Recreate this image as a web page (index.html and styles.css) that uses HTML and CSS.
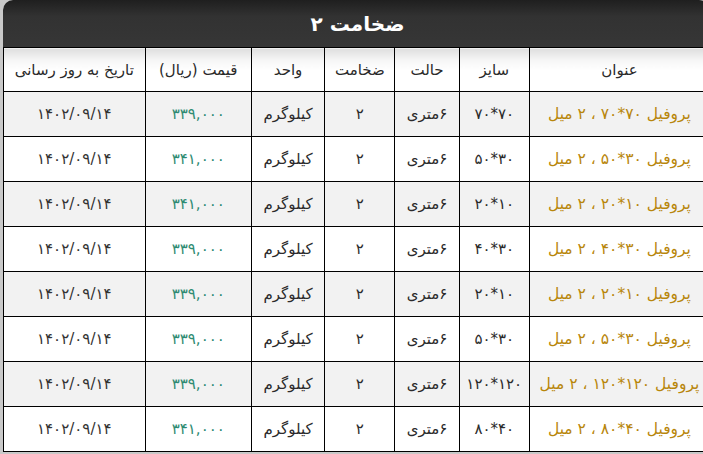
FILE: index.html
```html
<!DOCTYPE html>
<html lang="fa" dir="rtl">
<head>
<meta charset="utf-8">
<title>ضخامت ۲</title>
<link rel="stylesheet" href="styles.css">
</head>
<body>
<div class="panel">
  <div class="panel-head">ضخامت ۲</div>
  <table class="price-table">
    <colgroup>
      <col class="c-title"><col class="c-size"><col class="c-state"><col class="c-thick"><col class="c-unit"><col class="c-price"><col class="c-date">
    </colgroup>
    <thead>
      <tr><th>عنوان</th><th>سایز</th><th>حالت</th><th>ضخامت</th><th>واحد</th><th>قیمت (ریال)</th><th>تاریخ به روز رسانی</th></tr>
    </thead>
    <tbody>
      <tr><td class="name">پروفیل ۷۰*۷۰ ، ۲ میل</td><td>۷۰*۷۰</td><td>۶متری</td><td>۲</td><td>کیلوگرم</td><td class="price">۳۳۹,۰۰۰</td><td class="date">۱۴۰۲/۰۹/۱۴</td></tr>
      <tr><td class="name">پروفیل ۳۰*۵۰ ، ۲ میل</td><td>۳۰*۵۰</td><td>۶متری</td><td>۲</td><td>کیلوگرم</td><td class="price">۳۴۱,۰۰۰</td><td class="date">۱۴۰۲/۰۹/۱۴</td></tr>
      <tr><td class="name">پروفیل ۱۰*۲۰ ، ۲ میل</td><td>۱۰*۲۰</td><td>۶متری</td><td>۲</td><td>کیلوگرم</td><td class="price">۳۴۱,۰۰۰</td><td class="date">۱۴۰۲/۰۹/۱۴</td></tr>
      <tr><td class="name">پروفیل ۳۰*۴۰ ، ۲ میل</td><td>۳۰*۴۰</td><td>۶متری</td><td>۲</td><td>کیلوگرم</td><td class="price">۳۳۹,۰۰۰</td><td class="date">۱۴۰۲/۰۹/۱۴</td></tr>
      <tr><td class="name">پروفیل ۱۰*۲۰ ، ۲ میل</td><td>۱۰*۲۰</td><td>۶متری</td><td>۲</td><td>کیلوگرم</td><td class="price">۳۳۹,۰۰۰</td><td class="date">۱۴۰۲/۰۹/۱۴</td></tr>
      <tr><td class="name">پروفیل ۳۰*۵۰ ، ۲ میل</td><td>۳۰*۵۰</td><td>۶متری</td><td>۲</td><td>کیلوگرم</td><td class="price">۳۳۹,۰۰۰</td><td class="date">۱۴۰۲/۰۹/۱۴</td></tr>
      <tr><td class="name">پروفیل ۱۲۰*۱۲۰ ، ۲ میل</td><td>۱۲۰*۱۲۰</td><td>۶متری</td><td>۲</td><td>کیلوگرم</td><td class="price">۳۳۹,۰۰۰</td><td class="date">۱۴۰۲/۰۹/۱۴</td></tr>
      <tr><td class="name">پروفیل ۴۰*۸۰ ، ۲ میل</td><td>۴۰*۸۰</td><td>۶متری</td><td>۲</td><td>کیلوگرم</td><td class="price">۳۴۱,۰۰۰</td><td class="date">۱۴۰۲/۰۹/۱۴</td></tr>
    </tbody>
  </table>
</div>
</body>
</html>
```
FILE: styles.css
```css
html, body {
  margin: 0;
  padding: 0;
  overflow: hidden;
  background: #c9c9c9;
}
body {
  width: 703px;
  height: 454px;
  font-family: "DejaVu Sans", "Noto Sans", sans-serif;
  direction: rtl;
}
.panel {
  width: 706px;
  margin-right: -6px;
  margin-left: 3px;
  background: #fff;
  border-radius: 10px 10px 0 0;
  overflow: hidden;
}
.panel-head {
  height: 47px;
  background: linear-gradient(#1f1f1f, #323232 35%, #363636);
  color: #fff;
  font-weight: bold;
  font-size: 20px;
  display: flex;
  align-items: center;
  justify-content: center;
  padding-left: 3px;
  box-sizing: border-box;
}
.price-table {
  width: 706px;
  border-collapse: collapse;
  table-layout: fixed;
  font-size: 15px;
  color: #2b2b2b;
}
.c-title { width: 179px; }
.c-size { width: 70px; }
.c-state { width: 64px; }
.c-thick { width: 70px; }
.c-unit { width: 73px; }
.c-price { width: 106px; }
.c-date { width: 141px; }
.price-table th,
.price-table td {
  border: 1px solid #000;
  text-align: center;
  padding: 0;
  white-space: nowrap;
}
.price-table th {
  height: 43px;
  font-weight: normal;
  color: #2a2a2a;
  background: linear-gradient(#dedede, #f6f6f6 12px, #fff 22px);
}
.price-table td {
  height: 44px;
}
.price-table tbody tr:nth-child(odd) td {
  background: #f2f2f2;
}
.price-table tbody tr:nth-child(even) td {
  background: #fff;
}
.price-table td.name {
  color: #b8860b;
  font-size: 15.5px;
}
.price-table td.price {
  color: #2e8b72;
}
.price-table td.date {
  color: #333;
}
.price-table th:first-child,
.price-table td:first-child {
  border-right: none;
}
```
